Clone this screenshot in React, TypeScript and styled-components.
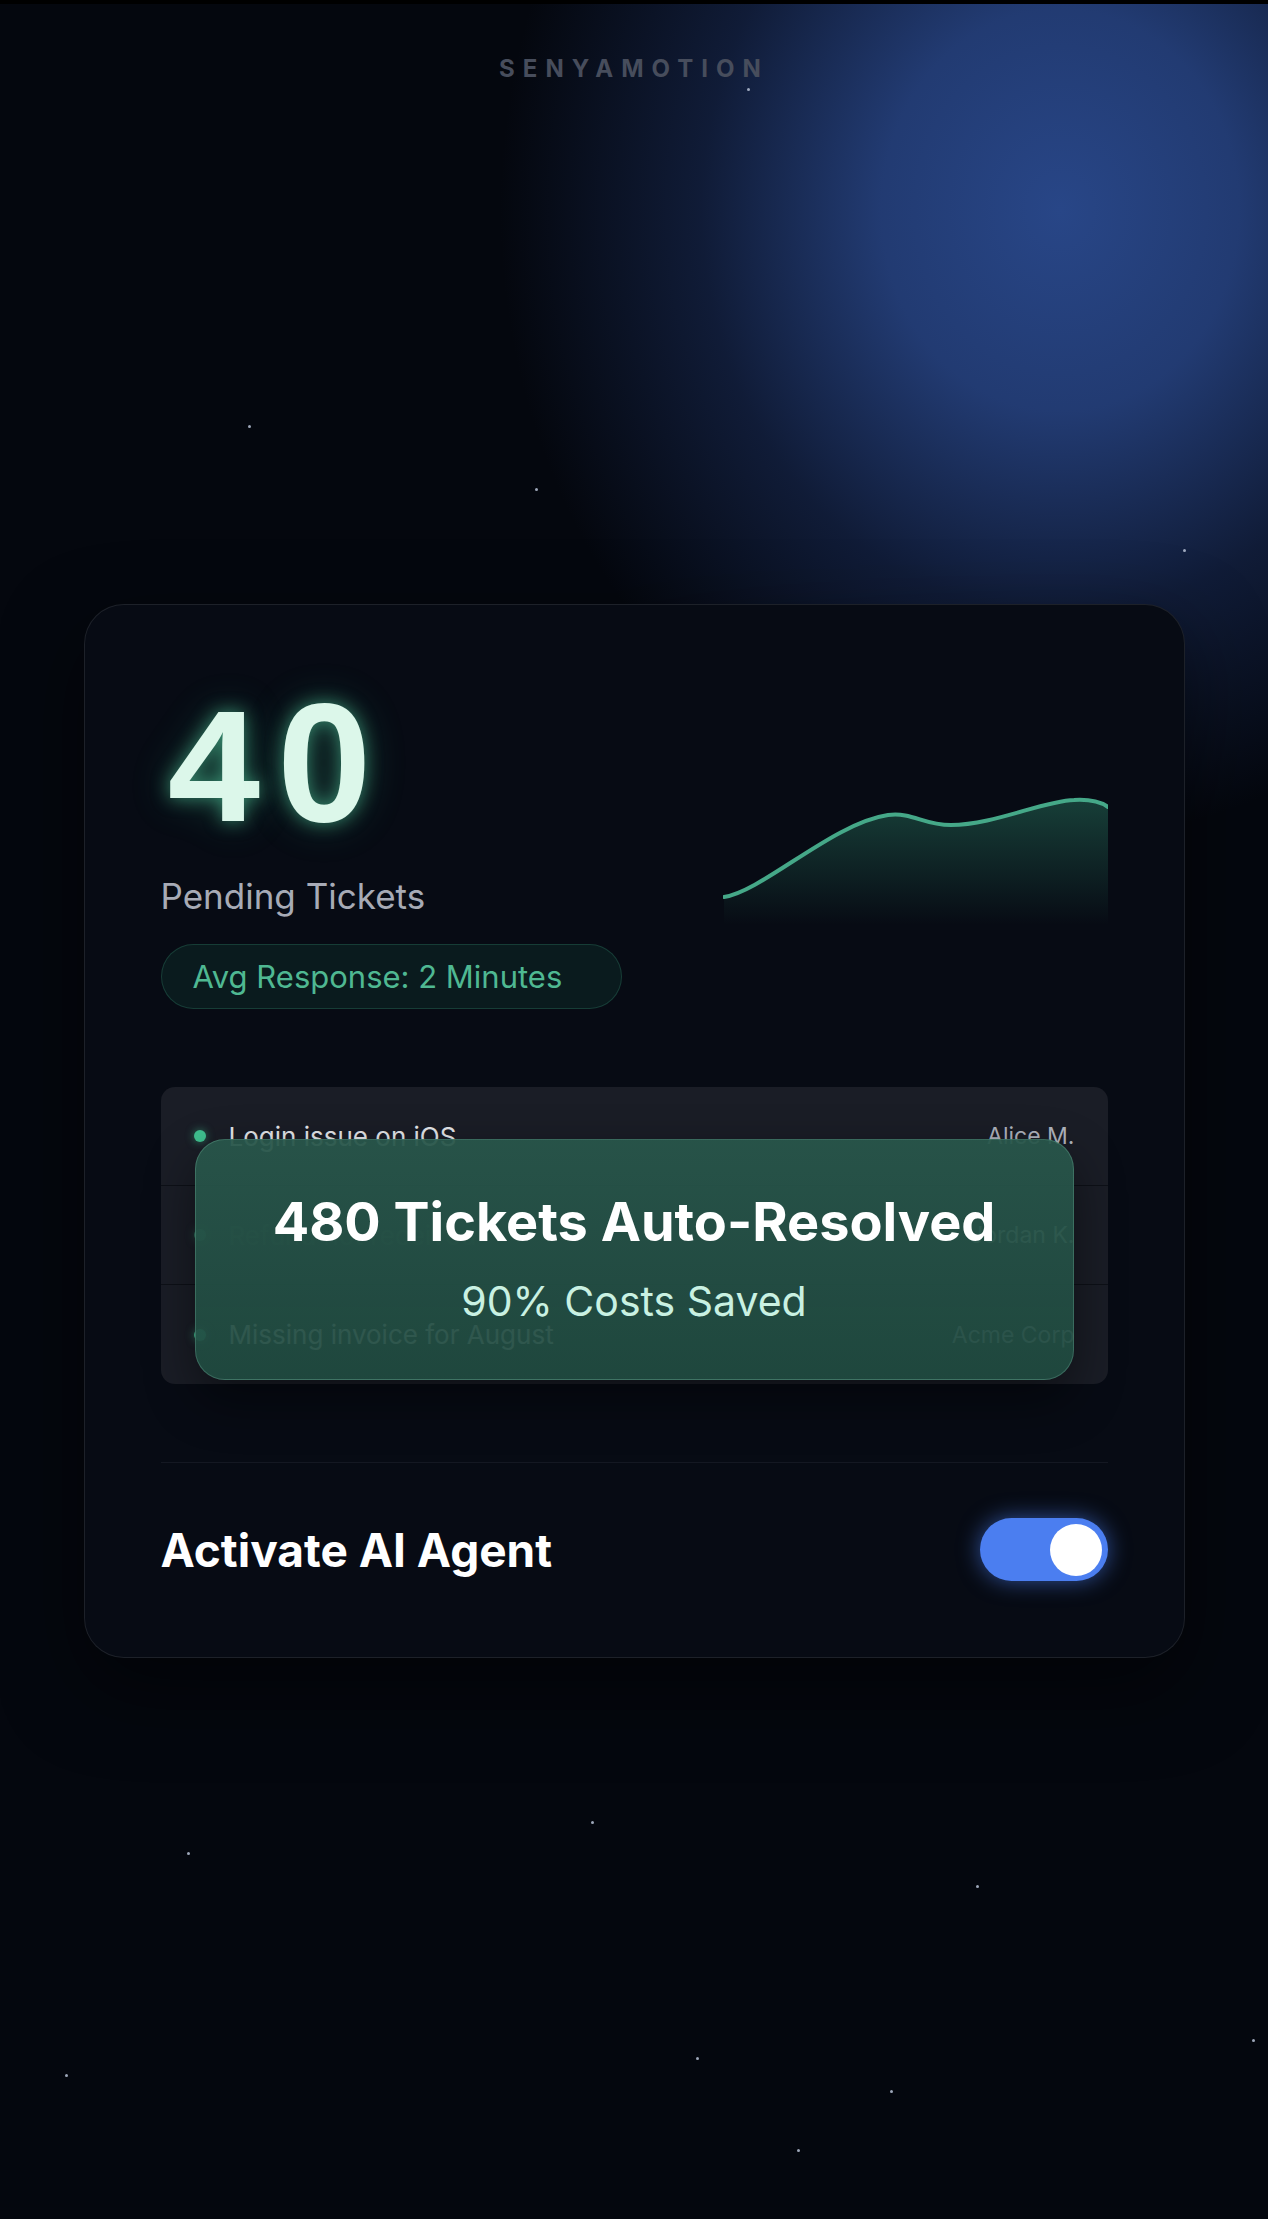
import React, { FunctionComponent } from 'react';
import styled, { createGlobalStyle } from 'styled-components';

const GlobalStyle = createGlobalStyle`
  html, body {
    margin: 0;
    padding: 0;
    background: #04070e;
  }
  body {
    font-family: Inter, 'Noto Sans', sans-serif;
    -webkit-font-smoothing: antialiased;
  }
`;

const Page = styled.div`
  position: relative;
  min-height: 2219px;
  overflow: hidden;
  background:
    radial-gradient(ellipse 560px 630px at 1060px 210px, rgba(40, 70, 135, 1) 0%, rgba(38, 66, 128, 0.88) 32%, rgba(28, 48, 96, 0.5) 64%, rgba(4, 7, 14, 0) 100%),
    #04070e;
`;

const TopStrip = styled.div`
  height: 4px;
  background: #000;
`;

const Brand = styled.div`
  padding-top: 50px;
  line-height: 30px;
  text-align: center;
  font-size: 24px;
  font-weight: 700;
  letter-spacing: 8px;
  color: #474d5c;
`;

const Star = styled.span<{ $x: number; $y: number }>`
  position: absolute;
  left: ${(p) => p.$x}px;
  top: ${(p) => p.$y}px;
  width: 3px;
  height: 3px;
  border-radius: 50%;
  background: #b9c2d6;
  opacity: 0.85;
`;

const Card = styled.div`
  position: relative;
  box-sizing: border-box;
  width: 1101px;
  margin: 520px auto 0;
  padding: 75px 76px 76px;
  border-radius: 40px;
  border: 1px solid rgba(255, 255, 255, 0.09);
  background: #070b14;
  box-shadow: 0 30px 80px rgba(0, 0, 0, 0.5);
`;

const TopRow = styled.div`
  display: flex;
  justify-content: space-between;
  align-items: flex-start;
`;

const StatColumn = styled.div`
  display: flex;
  flex-direction: column;
  align-items: flex-start;
`;

const BigNumber = styled.div`
  display: flex;
  align-items: baseline;
  height: 166px;
  color: #dcf7ea;
  text-shadow: 0 0 18px rgba(90, 220, 170, 0.55), 0 0 40px rgba(60, 190, 140, 0.3);
`;

// typewriter four with its foot
const MonoDigit = styled.span`
  margin-left: 4px;
  font-family: 'Liberation Mono', 'Courier New', monospace;
  font-weight: 700;
  font-size: 166px;
  line-height: 166px;
`;

// plain oval zero, no dot
const OvalDigit = styled.span`
  margin-left: 13px;
  font-family: 'Liberation Sans', Arial, sans-serif;
  font-weight: 700;
  font-size: 169px;
  line-height: 166px;
`;

const StatLabel = styled.div`
  margin-top: 30px;
  font-size: 35px;
  line-height: 40px;
  color: #a7abb6;
`;

const Pill = styled.div`
  box-sizing: border-box;
  display: flex;
  align-items: center;
  width: 461px;
  height: 65px;
  margin-top: 28px;
  padding-left: 31px;
  border-radius: 33px;
  border: 1px solid rgba(70, 180, 140, 0.22);
  background: rgba(30, 110, 85, 0.16);
  font-size: 31px;
  color: #4fb892;
`;

const Chart = styled.svg`
  width: 385px;
  height: 130px;
  margin-top: 115px;
`;

const TicketList = styled.div`
  position: relative;
  margin-top: 78px;
  border-radius: 14px;
  background: #1a1d26;
`;

const Row = styled.div<{ $last?: boolean }>`
  display: flex;
  align-items: center;
  height: 99px;
  padding: 0 33px;
  border-bottom: ${(p) => (p.$last ? 'none' : '1px solid #0d1017')};
  box-sizing: border-box;
`;

const Dot = styled.span<{ $fade?: number }>`
  width: 12px;
  height: 12px;
  border-radius: 50%;
  background: #3fbf8f;
  box-shadow: 0 0 8px rgba(63, 191, 143, 0.6);
  opacity: ${(p) => p.$fade ?? 1};
`;

const RowTitle = styled.span<{ $fade?: number }>`
  margin-left: 23px;
  flex: 1;
  font-size: 26px;
  color: #e4e6ea;
  opacity: ${(p) => p.$fade ?? 1};
`;

const RowName = styled.span`
  font-size: 23px;
  color: #aeb3bd;
`;

const Toast = styled.div`
  position: absolute;
  left: 34px;
  right: 34px;
  top: 52px;
  bottom: 4px;
  display: flex;
  flex-direction: column;
  align-items: center;
  justify-content: center;
  gap: 22px;
  padding-bottom: 4px;
  border-radius: 30px;
  border: 1px solid rgba(130, 210, 180, 0.26);
  background: linear-gradient(180deg, rgba(40, 86, 74, 0.95) 0%, rgba(32, 74, 64, 0.93) 100%);
  box-shadow: 0 20px 50px rgba(0, 0, 0, 0.45);
`;

const ToastTitle = styled.div`
  font-size: 54px;
  line-height: 64px;
  font-weight: 700;
  color: #ffffff;
`;

const ToastSub = styled.div`
  font-size: 41px;
  line-height: 50px;
  color: #c9f1e2;
`;

const Divider = styled.hr`
  margin: 78px 0 0;
  height: 1px;
  border: none;
  background: #141822;
`;

const AgentRow = styled.div`
  display: flex;
  align-items: center;
  justify-content: space-between;
  margin-top: 55px;
`;

const AgentLabel = styled.div`
  font-size: 46px;
  font-weight: 700;
  color: #ffffff;
`;

const Toggle = styled.div<{ $on: boolean }>`
  box-sizing: border-box;
  display: flex;
  align-items: center;
  justify-content: ${(p) => (p.$on ? 'flex-end' : 'flex-start')};
  width: 128px;
  height: 63px;
  padding: 0 6px;
  border-radius: 32px;
  background: ${(p) => (p.$on ? '#4b7ef0' : '#2a2f3a')};
  box-shadow: ${(p) => (p.$on ? '0 0 22px rgba(75, 126, 240, 0.6)' : 'none')};
`;

const Knob = styled.span`
  width: 52px;
  height: 52px;
  border-radius: 50%;
  background: #ffffff;
`;

const stars = [
  [747, 88],
  [248, 425],
  [535, 488],
  [1183, 549],
  [591, 1821],
  [187, 1852],
  [976, 1885],
  [65, 2074],
  [696, 2057],
  [890, 2090],
  [797, 2149],
  [1252, 2039],
];

const tickets = [
  { title: 'Login issue on iOS', name: 'Alice M.', fade: 1 },
  { title: 'Refund not received', name: 'Jordan K.', fade: 0.1 },
  { title: 'Missing invoice for August', name: 'Acme Corp', fade: 1 },
];

const TrendChart: FunctionComponent = () => (
  <Chart viewBox="0 0 385 130">
    <defs>
      <linearGradient id="trendFill" x1="0" y1="0" x2="0" y2="1">
        <stop offset="0%" stopColor="#2f8c6e" stopOpacity="0.4" />
        <stop offset="100%" stopColor="#2f8c6e" stopOpacity="0" />
      </linearGradient>
    </defs>
    <path
      d="M1 102 C40 96 110 28 165 20 C190 17 200 30 228 30 C270 30 320 6 351 5 C368 4 378 7 385 12 L385 130 L1 130 Z"
      fill="url(#trendFill)"
    />
    <path
      d="M1 102 C40 96 110 28 165 20 C190 17 200 30 228 30 C270 30 320 6 351 5 C368 4 378 7 385 12"
      fill="none"
      stroke="#45a888"
      strokeWidth="4"
      strokeLinecap="round"
    />
  </Chart>
);

export default function App() {
  return (
    <Page>
      <GlobalStyle />
      <TopStrip />
      {stars.map(([x, y]) => (
        <Star key={`${x}-${y}`} $x={x} $y={y} />
      ))}
      <Brand>SENYAMOTION</Brand>
      <Card>
        <TopRow>
          <StatColumn>
            <BigNumber>
              <MonoDigit>4</MonoDigit>
              <OvalDigit>0</OvalDigit>
            </BigNumber>
            <StatLabel>Pending Tickets</StatLabel>
            <Pill>Avg Response: 2 Minutes</Pill>
          </StatColumn>
          <TrendChart />
        </TopRow>
        <TicketList>
          {tickets.map((t, i) => (
            <Row key={t.title} $last={i === tickets.length - 1}>
              <Dot $fade={t.fade < 1 ? 0.5 : 1} />
              <RowTitle $fade={t.fade}>{t.title}</RowTitle>
              <RowName>{t.name}</RowName>
            </Row>
          ))}
          <Toast>
            <ToastTitle>480 Tickets Auto-Resolved</ToastTitle>
            <ToastSub>90% Costs Saved</ToastSub>
          </Toast>
        </TicketList>
        <Divider />
        <AgentRow>
          <AgentLabel>Activate AI Agent</AgentLabel>
          <Toggle $on>
            <Knob />
          </Toggle>
        </AgentRow>
      </Card>
    </Page>
  );
}
